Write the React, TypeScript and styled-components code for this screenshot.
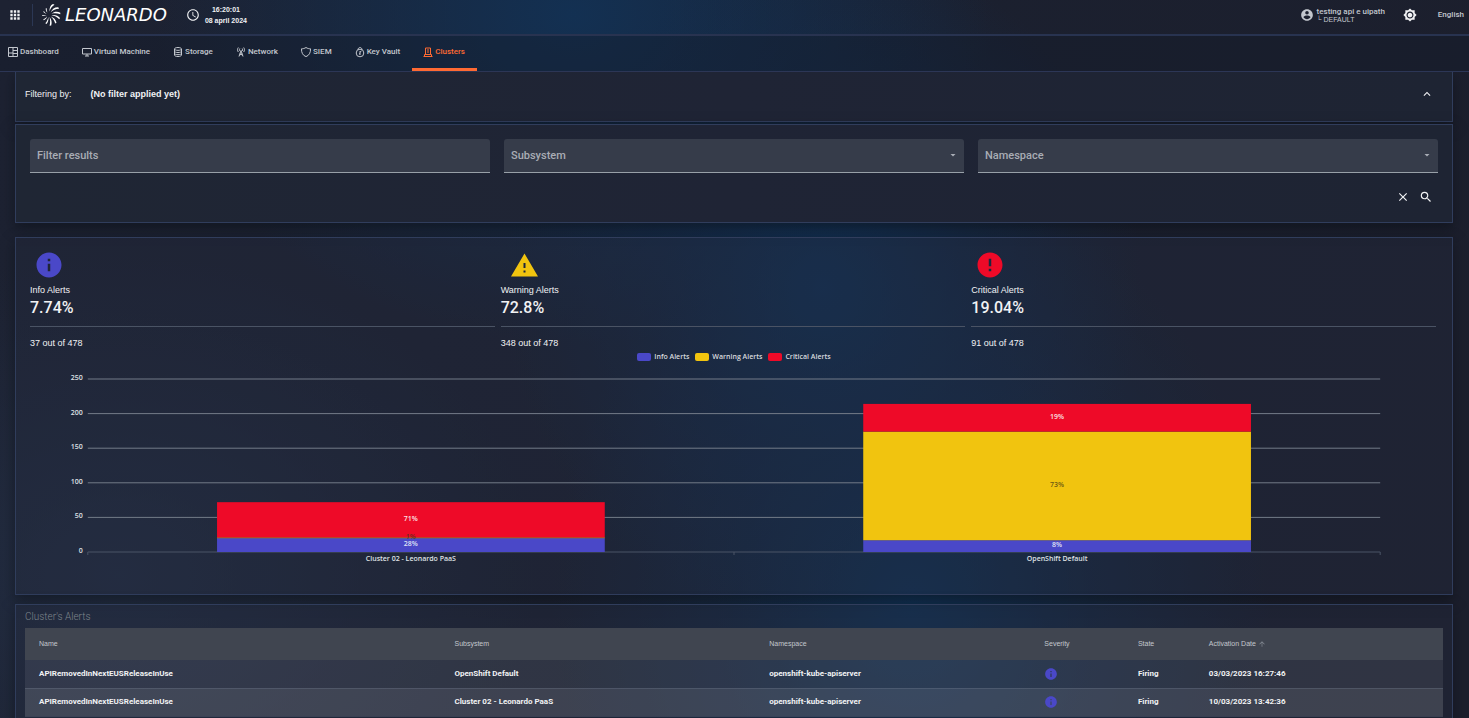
import React from "react";
import styled, { createGlobalStyle } from "styled-components";
import {
  MdAccessTime,
  MdApps,
  MdArrowDropDown,
  MdArrowUpward,
  MdBrightness7,
  MdClose,
  MdError,
  MdInfo,
  MdKeyboardArrowUp,
  MdSearch,
} from "react-icons/md";

const color = {
  info: "#4a48c8",
  warning: "#f1c40f",
  critical: "#ee0a28",
  accent: "#ff6a33",
  line: "#303d5c",
  text: "#f1f2f4",
  muted: "#c3c7ce",
};

const sans = `"Liberation Sans", Arial, sans-serif`;
const roboto = `Roboto, sans-serif`;
const chartFont = `"Open Sans", "Noto Sans", sans-serif`;

const GlobalStyle = createGlobalStyle`
  * { box-sizing: border-box; }
  body {
    margin: 0;
    background: #1b1f2d;
    color: ${color.text};
    font: 9px/12px ${sans};
  }
  button, input, select { font: inherit; color: inherit; }
  h1, h2, h3, p, ul, dl, dd { margin: 0; padding: 0; }
  ul { list-style: none; }
`;

const Page = styled.div`
  display: flex;
  flex-direction: column;
  height: 100vh;
  overflow: hidden;
  background:
    radial-gradient(ellipse 320px 340px at 56% 40%, rgba(16, 50, 88, 0.85), rgba(18, 46, 80, 0.45) 50%, transparent),
    radial-gradient(ellipse 360px 420px at 62% 84%, rgba(16, 50, 86, 0.95), rgba(18, 46, 78, 0.5) 50%, transparent),
    radial-gradient(ellipse 420px 330px at 39% 2%, rgba(18, 50, 86, 0.9), transparent),
    radial-gradient(ellipse 420px 320px at 8% 80%, rgba(36, 48, 70, 0.8), transparent),
    linear-gradient(100deg, #1d2232, #1b202f 60%, #1c1f2d);
`;

const Header = styled.header`
  display: flex;
  align-items: center;
  height: 36px;
  padding: 0 5px 4px 8px;
  border-bottom: 2px solid #283350;
  flex: none;
`;

const IconButton = styled.button`
  display: inline-flex;
  align-items: center;
  justify-content: center;
  width: 14px;
  height: 14px;
  padding: 0;
  border: 0;
  background: none;
  color: ${color.text};
  cursor: pointer;
`;

const Divider = styled.span`
  width: 1px;
  height: 22px;
  margin: 0 8px 0 10px;
  background: #2b3754;
`;

const Brand = styled.a`
  display: flex;
  align-items: center;
  gap: 4px;
  color: #fff;
  text-decoration: none;
`;

const Wordmark = styled.span`
  font: italic 18px/22px "DejaVu Sans", sans-serif;
`;

const Clock = styled.div`
  display: flex;
  align-items: center;
  gap: 5px;
  margin-left: 19px;
`;

const ClockText = styled.time`
  font: 700 7px/11px ${sans};
  text-align: center;
`;

const HeaderEnd = styled.div`
  display: flex;
  align-items: center;
  margin-left: auto;
  color: ${color.muted};
`;

const User = styled.div`
  display: flex;
  align-items: center;
  gap: 3px;
  margin-right: 18px;
`;

const UserName = styled.p`
  font: 500 8px/9px ${roboto};
`;

const Tenant = styled.p`
  font: 7px/7px ${sans};
`;

const Language = styled.button`
  margin-left: 21px;
  padding: 0;
  border: 0;
  background: none;
  color: ${color.muted};
  font: 500 8px/12px ${roboto};
`;

const Nav = styled.nav`
  display: flex;
  flex: none;
  height: 36px;
  border-bottom: 1px solid #2c3656;
  background: rgba(20, 28, 42, 0.4);
`;

const NavLink = styled.a<{ $active?: boolean }>`
  display: flex;
  align-items: center;
  gap: 2px;
  padding: 0 12px 0 11px;
  border-bottom: 3px solid ${(p) => (p.$active ? color.accent : "transparent")};
  color: ${(p) => (p.$active ? color.accent : color.muted)};
  font: 500 8px/12px ${roboto};
  text-decoration: none;
  white-space: nowrap;

  &:first-child {
    padding-left: 8px;
  }
`;

const Main = styled.main`
  flex: 1;
  min-height: 0;
  overflow-y: auto;
  scrollbar-width: none;
  padding: 0 16px 0 15px;
`;

const Panel = styled.section<{ $solid?: boolean }>`
  border: 1px solid ${color.line};
  background: ${(p) =>
    p.$solid ? "linear-gradient(90deg, #1f2634, #1f2435 50%, #1e2433)" : "rgba(36, 44, 62, 0.35)"};
  box-shadow: 0 5px 12px rgba(10, 14, 20, 0.5);
`;

const FilterSummary = styled(Panel)`
  display: flex;
  align-items: center;
  height: 50px;
  padding: 0 18px 5px 9px;
  border-top: 0;
  margin-bottom: 2px;
`;

const FilterValue = styled.strong`
  margin-left: 19px;
`;

const SummaryToggle = styled.div`
  display: flex;
  margin-left: auto;
`;

const FilterPanel = styled(Panel)`
  height: 99px;
  padding: 14px 14px 0;
  margin-bottom: 14px;
`;

const FilterGrid = styled.div`
  display: grid;
  grid-template-columns: repeat(3, 1fr);
  gap: 14px;
`;

const Field = styled.label`
  position: relative;
  display: block;
  height: 34px;
  border-bottom: 1px solid #98a0a8;
  border-radius: 3px 3px 0 0;
  background: #363c4a;
  font: 500 11px/14px ${roboto};
  color: #a9adb5;

  input,
  select {
    width: 100%;
    height: 100%;
    padding: 0 7px;
    border: 0;
    outline: 0;
    background: none;
    appearance: none;
  }
  input::placeholder {
    color: inherit;
    opacity: 1;
  }
  svg {
    position: absolute;
    right: 5px;
    top: 10px;
    pointer-events: none;
  }
`;

const FilterActions = styled.div`
  display: flex;
  justify-content: flex-end;
  gap: 9px;
  padding: 17px 5px 0 0;
`;

const StatsPanel = styled(Panel)`
  height: 358px;
  margin-bottom: 9px;
`;

const Stats = styled.div`
  display: grid;
  grid-template-columns: repeat(3, 1fr);
  gap: 6px;
  padding: 12px 16px 0 14px;
`;

const Stat = styled.article`
  display: flex;
  flex-direction: column;
`;

const StatIcon = styled.span<{ $color: string }>`
  display: flex;
  margin-left: 4px;
  height: 30px;
  color: ${(p) => p.$color};
`;

const StatTitle = styled.h3`
  margin-top: 3px;
  font: 9px/14px ${sans};
`;

const StatPercent = styled.p`
  font: 500 16px/22px ${roboto};
`;

const StatTotal = styled.p`
  margin-top: 7px;
  padding-top: 9px;
  border-top: 1px solid #4a5364;
  font: 9px/14px ${sans};
`;

const Legend = styled.ul`
  display: flex;
  justify-content: center;
  gap: 6px;
  font: 600 7px/14px ${chartFont};
  color: #d8dade;
`;

const LegendItem = styled.li<{ $color: string }>`
  display: flex;
  align-items: center;
  gap: 3px;

  &::before {
    content: "";
    width: 14px;
    height: 8px;
    border-radius: 2px;
    background: ${(p) => p.$color};
  }
`;

const ChartSvg = styled.svg`
  display: block;
  width: 100%;
  height: 220px;
  font: 600 7px ${chartFont};
  fill: #dfe1e5;
`;

const TablePanel = styled(Panel)`
  padding: 5px 9px 20px;
`;

const TableTitle = styled.h2`
  font: 300 10px/14px ${roboto};
  color: #7d848b;
  margin-bottom: 4px;
`;

const Table = styled.table`
  width: 100%;
  table-layout: fixed;
  border-collapse: collapse;
  text-align: left;

  th,
  td {
    padding: 0 0 0 14px;
    white-space: nowrap;
  }
  th {
    height: 32px;
    font: 7px/10px ${sans};
    color: ${color.muted};
    background: #404550;
  }
  td {
    height: 28px;
    border-bottom: 1px solid rgba(120, 130, 150, 0.3);
    font: 700 8px/12px ${roboto};
  }
  tbody tr {
    background: rgba(255, 255, 255, 0.08);
  }
  tbody tr:nth-child(even) {
    background: rgba(255, 255, 255, 0.14);
  }
  svg {
    display: inline-block;
    vertical-align: middle;
  }
`;

const Col = styled.col<{ $width?: string }>`
  width: ${(p) => p.$width ?? "auto"};
`;

const blades = [
  "M8.500 8.500C8.300 5 9.500 2 12 1l1.500.8C11 3.300 9.500 5.500 8.500 8.500z",
  "M9.800 9.200C11 6 14 4 17.300 4.300l.7 1.400C14.500 5.800 12 7 9.800 9.200z",
  "M10.500 10.800C13 8.500 16.500 8.200 19.300 9.800v1.400C16.300 10.200 13.300 10 10.500 10.800z",
  "M10.500 12.300c3-.8 6.500.2 8.500 2.700l-.7 1.200C16 14 13.500 12.800 10.500 12.300z",
  "M9.800 13.500c2.900.9 5.200 3.300 5.700 6.300l-1.300.8C13.500 17.800 12 15.500 9.800 13.500z",
  "M8.600 14c1.900 2.300 2.600 5.500 1.600 8.500l-1.600.2C9.300 19.800 9.300 17 8.600 14z",
  "M7.300 14c.5 2.500-.1 5.200-1.800 7L4.300 20.300C6 18.500 6.900 16.300 7.300 14z",
  "M6.200 13.200C5.800 15 4.500 16.500 2.800 17.300L2.200 16.500C4 15.600 5.200 14.600 6.200 13.200z",
  "M5.600 12C4.500 13 2.800 13.300 1.200 12.900L1.300 12C2.800 12.400 4.200 12.400 5.600 12z",
  "M5.600 10.700C4.300 10.700 2.900 9.900 2.200 8.600L3 8.200C3.700 9.300 4.600 10.100 5.600 10.700z",
  "M6.400 9.600C5.200 8.700 4.500 7 4.800 5.300L5.700 5.200C5.600 6.800 5.800 8.300 6.400 9.600z",
];

function BrandMark() {
  return (
    <svg width="20" height="24" viewBox="0 0 20 24" fill="#fff" aria-hidden="true">
      {blades.map((d) => (
        <path key={d} d={d} />
      ))}
    </svg>
  );
}

function AccountIcon() {
  return (
    <svg width="14" height="14" viewBox="0 0 24 24" fill="currentColor" aria-hidden="true">
      <path d="M12 2C6.480 2 2 6.480 2 12s4.480 10 10 10 10-4.480 10-10S17.520 2 12 2zm0 3c1.660 0 3 1.340 3 3s-1.340 3-3 3-3-1.340-3-3 1.340-3 3-3zm0 14.200c-2.500 0-4.710-1.280-6-3.220.030-1.990 4-3.080 6-3.080 1.990 0 5.970 1.090 6 3.080-1.290 1.940-3.500 3.220-6 3.220z" />
    </svg>
  );
}

function InfoStatIcon() {
  return <MdInfo size={30} />;
}

function WarningStatIcon() {
  return (
    <svg width="38" height="30" viewBox="0 0 38 30" aria-hidden="true">
      <path
        fill="currentColor"
        fillRule="evenodd"
        d="M19.500 3.500 33 26.500H6zM18.500 13v5h2v-5zM18.500 20.500v2h2v-2z"
      />
    </svg>
  );
}

function CriticalStatIcon() {
  return <MdError size={30} />;
}

const navIcons: Record<string, React.ReactNode> = {
  Dashboard: <path d="M.5 .5h9v9h-9zM5 .5v9M.5 6H5M5 3.500h4.500M5 6.500h4.500" />,
  "Virtual Machine": <path d="M.5 1.500h9v5.500h-9zM3 9h4M5 7v2" />,
  Storage: (
    <path d="M1.500 2c0-2 7-2 7 0v6c0 2-7 2-7 0zM1.500 2c0 1.800 7 1.800 7 0M1.500 4.200c0 1.800 7 1.800 7 0M1.500 6.300c0 1.800 7 1.800 7 0" />
  ),
  Network: (
    <path d="M5 3.500 3 9.500M5 3.500l2 6M3.800 6.500l2.800 1.800M6.200 6.500 3.400 8.300M2.300 .5c-1 1.500-1 3 0 4.500M7.700 .5c1 1.500 1 3 0 4.500M3.800 1.500c-.5 1-.5 1.700 0 2.500M6.200 1.500c.5 1 .5 1.700 0 2.500" />
  ),
  SIEM: <path d="M5 .5C3.500 1.500 2 1.800.5 1.800.3 5.500 1.800 8.500 5 9.600 8.200 8.500 9.700 5.500 9.500 1.800 8 1.800 6.500 1.500 5 .5z" />,
  "Key Vault": (
    <>
      <circle cx="5" cy="6" r="3.800" />
      <path d="M3 2.800c0-3 4-3 4 0M5 4v4M5 5.200l1.500-1.200M4 6.800h1" />
    </>
  ),
  Clusters: <path d="M.5 9.500h9M2.500 8V1h5v7M4 3h2M4 5h2M1.500 9.500v-2h7v2" />,
};

function NavIcon({ name }: { name: string }) {
  return (
    <svg width="10" height="10" viewBox="0 0 10 10" fill="none" stroke="currentColor" overflow="visible" aria-hidden="true">
      {navIcons[name]}
    </svg>
  );
}

const stats = [
  { title: "Info Alerts", percent: "7.74%", total: "37 out of 478", color: color.info, Icon: InfoStatIcon },
  { title: "Warning Alerts", percent: "72.8%", total: "348 out of 478", color: color.warning, Icon: WarningStatIcon },
  { title: "Critical Alerts", percent: "19.04%", total: "91 out of 478", color: color.critical, Icon: CriticalStatIcon },
];

const clusters = [
  { name: "Cluster 02 - Leonardo PaaS", values: [20, 1, 51], labels: ["28%", "1%", "71%"] },
  { name: "OpenShift Default", values: [17, 157, 40], labels: ["8%", "73%", "19%"] },
];

const series = [
  { fill: color.info, label: "#dfe1f5" },
  { fill: color.warning, label: "rgba(60, 50, 20, 0.75)" },
  { fill: color.critical, label: "#fbe4e6" },
];

const BASELINE = 188;
const toY = (value: number) => BASELINE - (value * 173) / 250;

function Chart() {
  return (
    <ChartSvg role="img" aria-label="Alerts by cluster">
      {[0, 50, 100, 150, 200, 250].map((tick) => (
        <g key={tick}>
          <text x="5%" dx="-5" y={toY(tick) + 1} textAnchor="end">
            {tick}
          </text>
          <line x1="5%" x2="95%" y1={toY(tick)} y2={toY(tick)} stroke={tick ? "#737b88" : "#4a5466"} />
        </g>
      ))}
      {["5%", "50%", "95%"].map((x) => (
        <line key={x} x1={x} x2={x} y1={BASELINE} y2={BASELINE + 3} stroke="#4a5466" />
      ))}
      {clusters.map((cluster, c) => {
        const left = 5 + c * 45 + 9;
        let sum = 0;
        const segments = cluster.values.map((value, s) => {
          const bottom = toY(sum);
          sum += value;
          return { top: toY(sum), bottom, s };
        });
        return (
          <g key={cluster.name}>
            {segments.map(({ top, bottom, s }) => (
              <rect key={s} x={`${left}%`} width="27%" y={top} height={bottom - top} fill={series[s].fill} />
            ))}
            {segments.map(({ top, bottom, s }) => (
              <text key={s} x={`${left + 13.5}%`} y={(top + bottom) / 2 + 1} textAnchor="middle" fill={series[s].label}>
                {cluster.labels[s]}
              </text>
            ))}
            <text x={`${left + 13.5}%`} y={BASELINE + 9} textAnchor="middle">
              {cluster.name}
            </text>
          </g>
        );
      })}
    </ChartSvg>
  );
}

const alerts = [
  { name: "APIRemovedInNextEUSReleaseInUse", subsystem: "OpenShift Default", date: "03/03/2023 16:27:46" },
  { name: "APIRemovedInNextEUSReleaseInUse", subsystem: "Cluster 02 - Leonardo PaaS", date: "10/03/2023 13:42:36" },
];

export default function App() {
  return (
    <Page>
      <GlobalStyle />
      <Header>
        <IconButton aria-label="Applications">
          <MdApps size={14} />
        </IconButton>
        <Divider />
        <Brand href="#" aria-label="Leonardo home">
          <BrandMark />
          <Wordmark>LEONARDO</Wordmark>
        </Brand>
        <Clock>
          <MdAccessTime size={14} />
          <ClockText>
            16:20:01
            <br />
            08 april 2024
          </ClockText>
        </Clock>
        <HeaderEnd>
          <User>
            <AccountIcon />
            <div>
              <UserName>testing api e uipath</UserName>
              <Tenant>└ DEFAULT</Tenant>
            </div>
          </User>
          <IconButton aria-label="Theme">
            <MdBrightness7 size={14} />
          </IconButton>
          <Language>English</Language>
        </HeaderEnd>
      </Header>
      <Nav>
        {Object.keys(navIcons).map((name) => (
          <NavLink key={name} href="#" $active={name === "Clusters"}>
            <NavIcon name={name} />
            {name}
          </NavLink>
        ))}
      </Nav>
      <Main>
        <FilterSummary $solid>
          Filtering by:
          <FilterValue>(No filter applied yet)</FilterValue>
          <SummaryToggle>
            <IconButton aria-label="Collapse filters">
              <MdKeyboardArrowUp size={14} />
            </IconButton>
          </SummaryToggle>
        </FilterSummary>
        <FilterPanel $solid>
          <FilterGrid>
            <Field>
              <input placeholder="Filter results" aria-label="Filter results" />
            </Field>
            {["Subsystem", "Namespace"].map((name) => (
              <Field key={name}>
                <select aria-label={name}>
                  <option>{name}</option>
                </select>
                <MdArrowDropDown size={12} />
              </Field>
            ))}
          </FilterGrid>
          <FilterActions>
            <IconButton aria-label="Clear">
              <MdClose size={14} />
            </IconButton>
            <IconButton aria-label="Search">
              <MdSearch size={14} />
            </IconButton>
          </FilterActions>
        </FilterPanel>
        <StatsPanel>
          <Stats>
            {stats.map(({ title, percent, total, color: tint, Icon }) => (
              <Stat key={title}>
                <StatIcon $color={tint}>
                  <Icon />
                </StatIcon>
                <StatTitle>{title}</StatTitle>
                <StatPercent>{percent}</StatPercent>
                <StatTotal>{total}</StatTotal>
              </Stat>
            ))}
          </Stats>
          <Legend>
            {stats.map((s) => (
              <LegendItem key={s.title} $color={s.color}>
                {s.title}
              </LegendItem>
            ))}
          </Legend>
          <Chart />
        </StatsPanel>
        <TablePanel>
          <TableTitle>Cluster's Alerts</TableTitle>
          <Table>
            <colgroup>
              <Col $width="29.3%" />
              <Col $width="22.2%" />
              <Col $width="19.4%" />
              <Col $width="6.6%" />
              <Col $width="5%" />
              <Col />
            </colgroup>
            <thead>
              <tr>
                <th>Name</th>
                <th>Subsystem</th>
                <th>Namespace</th>
                <th>Severity</th>
                <th>State</th>
                <th>
                  Activation Date <MdArrowUpward size={8} color="#858b94" />
                </th>
              </tr>
            </thead>
            <tbody>
              {alerts.map((alert) => (
                <tr key={alert.date}>
                  <td>{alert.name}</td>
                  <td>{alert.subsystem}</td>
                  <td>openshift-kube-apiserver</td>
                  <td>
                    <MdInfo size={14} color={color.info} />
                  </td>
                  <td>Firing</td>
                  <td>{alert.date}</td>
                </tr>
              ))}
            </tbody>
          </Table>
        </TablePanel>
      </Main>
    </Page>
  );
}
